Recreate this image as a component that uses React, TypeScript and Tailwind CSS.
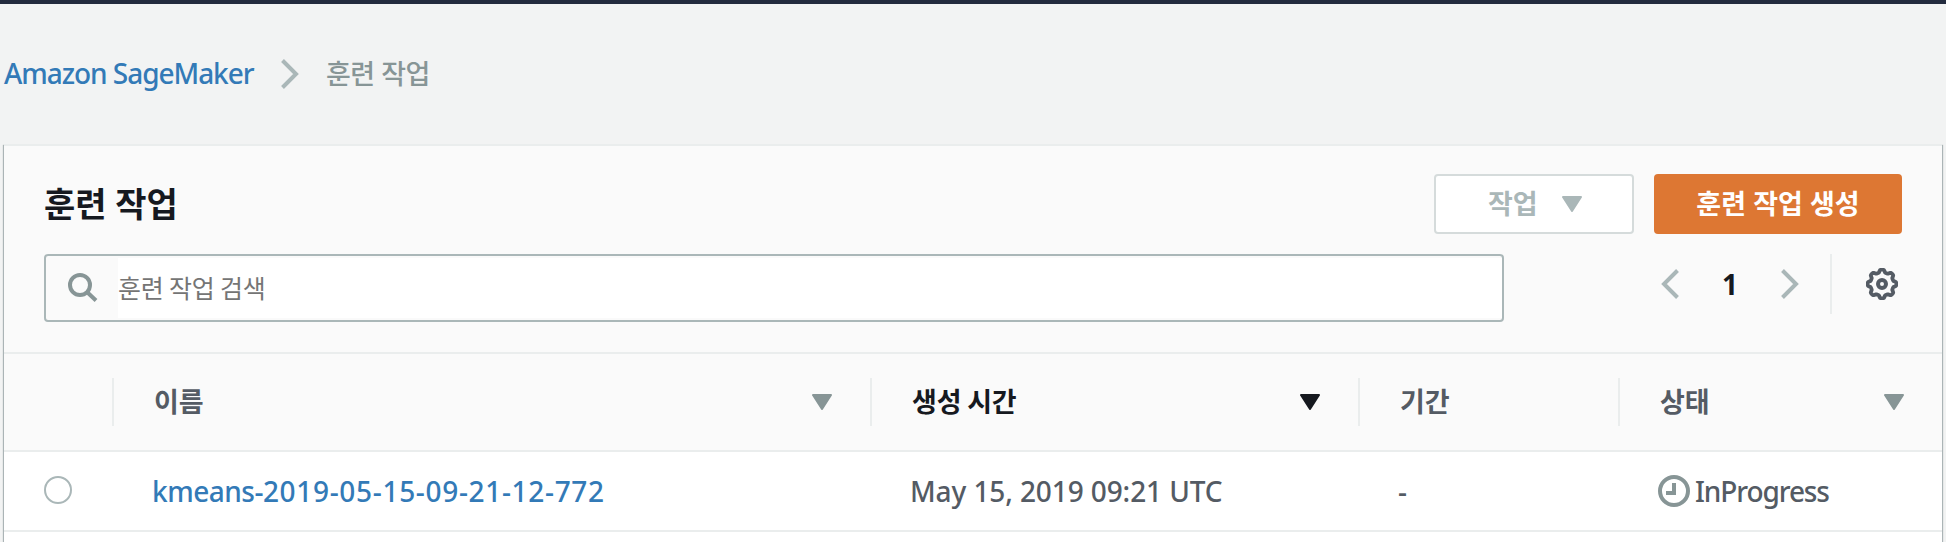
const latin = "font-['Noto_Sans','Noto_Sans_CJK_KR',sans-serif]";
const korean = "font-['Noto_Sans_CJK_KR','Noto_Sans',sans-serif]";

function Chevron({ left = false }: { left?: boolean }) {
  return (
    <svg width="18" height="30" viewBox="0 0 18 30" fill="none" stroke="#aab7b8" strokeWidth="4">
      <path d={left ? 'M16.500 1.500 3 15l13.500 13.500' : 'M1.500 1.500 15 15 1.500 28.500'} />
    </svg>
  );
}

function Caret({ color }: { color: string }) {
  return (
    <svg width="20" height="16" viewBox="0 0 20 16" fill={color} stroke={color} strokeWidth="2" strokeLinejoin="round">
      <path d="M1 1h18L10 15z" />
    </svg>
  );
}

function Gear() {
  const points: string[] = [];
  for (let i = 0; i < 96; i++) {
    const angle = (i / 96) * Math.PI * 2;
    const radius = 13 + 1.4 * Math.tanh(2.2 * Math.cos(8 * angle));
    points.push(`${(16 + radius * Math.cos(angle)).toFixed(2)} ${(16 + radius * Math.sin(angle)).toFixed(2)}`);
  }
  return (
    <svg width="32" height="32" viewBox="0 0 32 32" fill="none" stroke="#545b64" strokeWidth="3.800">
      <path d={`M${points.join('L')}z`} strokeLinejoin="round" />
      <circle cx="16" cy="16" r="4" strokeWidth="4" />
    </svg>
  );
}

function Clock() {
  return (
    <svg width="32" height="32" viewBox="0 0 32 32" fill="none" stroke="#879596" strokeWidth="4">
      <circle cx="16" cy="16" r="14" />
      <path d="M16 8v10H8" />
    </svg>
  );
}

function SearchIcon() {
  return (
    <svg width="30" height="30" viewBox="0 0 30 30" fill="none" stroke="#879596" strokeWidth="4">
      <circle cx="12" cy="12" r="10" />
      <path d="M19 19l9 8.500" />
    </svg>
  );
}

export default function App() {
  return (
    <div className={`flex h-[542px] w-[1946px] flex-col overflow-hidden bg-[#f2f3f3] ${korean}`}>
      <div className="h-1 shrink-0 bg-[#232b3e]" />
      <nav className="flex h-[140px] shrink-0 items-start pl-1 pt-[49px]">
        <a className={`w-[277px] whitespace-nowrap text-[28px] leading-[40px] font-medium tracking-[-1.05px] text-[#337ab7] ${latin}`}>Amazon SageMaker</a>
        <span className="mt-[6px] w-[45px]"><Chevron /></span>
        <span className="text-[27px] leading-[40px] font-medium tracking-[-0.5px] [word-spacing:1px] text-[#879596]">훈련 작업</span>
      </nav>
      <main className="mx-1 flex grow flex-col border-t-2 border-[#eaeded] bg-white shadow-[0_1px_1px_rgba(0,28,36,0.3),1px_1px_1px_rgba(0,28,36,0.25),-1px_1px_1px_rgba(0,28,36,0.25)]">
        <section className="h-[208px] shrink-0 border-b-2 border-[#eaeded] bg-[#fafafa] px-10 pt-7">
          <div className="flex h-[60px] items-center">
            <h1 className="grow pb-[2px] text-[34px] leading-[58px] font-bold [word-spacing:1px] text-[#16191f]">훈련 작업</h1>
            <button className="mr-5 flex h-[60px] w-[200px] items-center rounded-[4px] border-2 border-[#d5dbdb] bg-white pl-[52px] text-[27px] font-bold text-[#aab7b8]">
              <span className="w-[74px] pb-[2px] text-left">작업</span><Caret color="#aab7b8" />
            </button>
            <button className="h-[60px] w-[248px] rounded-[4px] bg-[#dd7733] pb-[2px] text-[27px] font-bold [word-spacing:1px] text-white">훈련 작업 생성</button>
          </div>
          <div className="mt-5 flex">
            <div className="flex h-[68px] w-[1460px] items-center rounded-[4px] border-2 border-[#aab7b8] bg-[#fafafa]">
              <span className="w-[72px] pl-[22px]"><SearchIcon /></span>
              <span className="h-[60px] grow bg-white text-[25px] leading-[58px] tracking-[-0.2px] text-[#757575]">훈련 작업 검색</span>
            </div>
            <div className="ml-[157px] flex h-[60px] items-center">
              <Chevron left />
              <span className={`w-[102px] text-center text-[28px] font-bold text-[#16191f] ${latin}`}>1</span>
              <Chevron />
              <span className="ml-[31px] mr-[34px] h-[60px] w-[2px] bg-[#eaeded]" />
              <Gear />
            </div>
          </div>
        </section>
        <div className="flex h-[98px] shrink-0 items-center border-b-2 border-[#eaeded] bg-[#fafafa] text-[27px] font-bold tracking-[-0.2px] text-[#545b64]">
          <div className="h-12 w-[110px] border-r-2 border-[#eaeded]" />
          <div className="flex h-12 w-[758px] items-center justify-between border-r-2 border-[#eaeded] pl-10 pr-[38px]"><span className="pb-[2px]">이름</span><Caret color="#879596" /></div>
          <div className="flex h-12 w-[488px] items-center justify-between border-r-2 border-[#eaeded] pl-10 pr-[38px] text-[#16191f]"><span className="pb-[2px]">생성 시간</span><Caret color="#16191f" /></div>
          <div className="flex h-12 w-[260px] items-center border-r-2 border-[#eaeded] pl-10"><span className="pb-[2px]">기간</span></div>
          <div className="flex h-12 grow items-center justify-between pl-10 pr-[38px]"><span className="pb-[2px]">상태</span><Caret color="#879596" /></div>
        </div>
        <div className={`flex h-20 shrink-0 items-center border-b-2 border-[#eaeded] text-[28px] font-medium text-[#545b64] ${latin}`}>
          <div className="w-[148px] pl-10"><div className="mb-[2px] h-7 w-7 rounded-full border-2 border-[#aab7b8]" /></div>
          <a className="w-[758px] whitespace-nowrap tracking-[0.68px] text-[#337ab7]"><span className="tracking-[-0.5px]">kmeans-</span>2019-05-15-09-21-12-772</a>
          <span className="w-[488px] whitespace-nowrap tracking-[-0.1px]">May 15, 2019 09:21 UTC</span>
          <span className="w-[260px]">-</span>
          <Clock /><span className="ml-[5px] tracking-[-1.1px]">InProgress</span>
        </div>
      </main>
    </div>
  );
}
